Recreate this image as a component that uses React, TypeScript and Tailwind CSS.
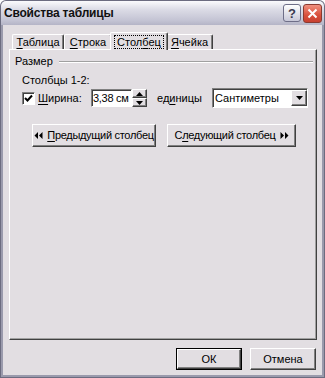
import React from "react";

const bevel =
  "border border-t-white border-l-white border-r-[#404040] border-b-[#404040] shadow-[inset_-1px_-1px_#808080]";
const sunken =
  "border border-t-[#808080] border-l-[#808080] border-r-white border-b-white shadow-[inset_1px_1px_#404040]";

function Tab({ label, u, w, selected }: { label: string; u: number; w: string; selected?: boolean }) {
  const text = (
    <span>
      {label.slice(0, u)}
      <span className="underline underline-offset-2">{label[u]}</span>
      {label.slice(u + 1)}
    </span>
  );
  if (selected) {
    return (
      <div className={`${w} relative z-10 -mx-[2px] -mb-[1px] h-[18px] pt-[2px] flex justify-center bg-[#e2dee2] border-t border-l border-t-white border-l-white border-r border-r-[#404040] shadow-[inset_-1px_0_#808080] rounded-t-[2px]`}>
        <span className="h-[14px] px-[2px] border border-dotted border-black leading-[12px] inline-block">{text}</span>
      </div>
    );
  }
  return (
    <div className={`${w} h-[15px] pt-[1px] text-center border-t border-l border-t-white border-l-white border-r border-r-[#404040] shadow-[inset_-1px_0_#808080] rounded-t-[2px] leading-[13px]`}>
      {text}
    </div>
  );
}

function DoubleArrow({ left }: { left?: boolean }) {
  return (
    <svg width="9" height="7" viewBox="0 0 9 7" className="shrink-0">
      {left ? (
        <path d="M4 0 L0.5 3.5 L4 7 Z M8.5 0 L5 3.5 L8.5 7 Z" fill="black" />
      ) : (
        <path d="M0.5 0 L4 3.5 L0.5 7 Z M5 0 L8.5 3.5 L5 7 Z" fill="black" />
      )}
    </svg>
  );
}

export default function App() {
  return (
    <div className="w-[325px] h-[378px] flex flex-col bg-[#6c6c80] rounded-t-[6px] p-[1px] font-['Liberation_Sans',sans-serif] text-[11px] text-black">
      {/* Title bar */}
      <div className="h-[24px] flex items-center rounded-t-[5px] bg-[linear-gradient(to_bottom,#fbfbfd,#dcdce6_35%,#c4c4d4_80%,#b4b4c6)] pl-[3px] pr-[2px]">
        <span className="font-bold text-[12px] tracking-[-0.2px] text-[#111]">Свойства таблицы</span>
        <div className="ml-auto flex gap-[2px] items-center">
          <div className="w-[18px] h-[18px] rounded-[3px] border border-[#6e6e88] bg-[linear-gradient(to_bottom,#ffffff,#c8c8d8)] flex items-center justify-center font-bold text-[13px] text-[#3a3a50] leading-none">
            ?
          </div>
          <div className="w-[19px] h-[19px] rounded-[3px] border border-[#8a3a30] bg-[linear-gradient(to_bottom,#f09080,#d8503c_60%,#c84030)] flex items-center justify-center">
            <svg width="11" height="11" viewBox="0 0 11 11">
              <path d="M1.5 1.5 L9.5 9.5 M9.5 1.5 L1.5 9.5" stroke="white" strokeWidth="2" />
            </svg>
          </div>
        </div>
      </div>

      {/* Body */}
      <div className="flex-1 flex flex-col bg-[#e2dee2] border-x-[2px] border-b-[2px] border-[#9a9aac] px-[6px]">
        {/* Tabs */}
        <div className="flex items-end pl-[3px] pt-[7px]">
          <Tab label="Таблица" u={0} w="w-[52px]" />
          <Tab label="Строка" u={0} w="w-[48px]" />
          <Tab label="Столбец" u={4} w="w-[58px]" selected />
          <Tab label="Ячейка" u={0} w="w-[47px]" />
        </div>

        {/* Panel */}
        <div className="h-[291px] w-[308px] border border-t-white border-l-white border-r-[#404040] border-b-[#404040] shadow-[inset_-1px_-1px_#a0a0a0] pl-[5px] pr-[3px] pt-[5px]">
          <div className="flex items-center h-[13px]">
            <span>Размер</span>
            <div className="flex-1 ml-[6px] border-t border-t-[#a0a0a0] border-b border-b-white" />
          </div>

          <div className="ml-[7px] mt-[6px] h-[13px] leading-[13px]">Столбцы 1-2:</div>

          <div className="flex items-center mt-[1px] ml-[7px] h-[20px]">
            <div className={`w-[13px] h-[13px] bg-white ${sunken} flex items-center justify-center`}>
              <svg width="9" height="9" viewBox="0 0 9 9">
                <path d="M1 4 L3.5 6.5 L8 1.5" stroke="black" strokeWidth="2" fill="none" />
              </svg>
            </div>
            <span className="ml-[3px] w-[53px]">
              <span className="underline underline-offset-2">Ш</span>ирина:
            </span>
            <div className={`w-[41px] h-[18px] bg-white ${sunken} flex items-center pl-[1px] leading-none whitespace-nowrap overflow-hidden tracking-[-0.3px]`}>
              3,38 см
            </div>
            <div className="flex flex-col w-[15px] h-[18px]">
              <div className={`flex-1 bg-[#e2dee2] ${bevel} flex items-center justify-center`}>
                <svg width="7" height="4" viewBox="0 0 7 4">
                  <path d="M0 4 L3.5 0 L7 4 Z" fill="black" />
                </svg>
              </div>
              <div className={`flex-1 bg-[#e2dee2] ${bevel} flex items-center justify-center`}>
                <svg width="7" height="4" viewBox="0 0 7 4">
                  <path d="M0 0 L3.5 4 L7 0 Z" fill="black" />
                </svg>
              </div>
            </div>
            <span className="ml-[10px] w-[55px]">
              ед<span className="underline underline-offset-2">и</span>ницы
            </span>
            <div className={`w-[96px] h-[20px] bg-white ${sunken} flex items-center`}>
              <span className="pl-[2px] flex-1">Сантиметры</span>
              <div className={`w-[16px] h-[16px] bg-[#e2dee2] ${bevel} flex items-center justify-center`}>
                <svg width="7" height="4" viewBox="0 0 7 4">
                  <path d="M0 0 L3.5 4 L7 0 Z" fill="black" />
                </svg>
              </div>
            </div>
          </div>

          <div className="flex mt-[16px] ml-[17px] gap-[11px] whitespace-nowrap tracking-[-0.3px]">
            <div className={`w-[124px] h-[23px] ${bevel} flex items-center justify-center gap-[4px]`}>
              <DoubleArrow left />
              <span>
                <span className="underline underline-offset-2">П</span>редыдущий столбец
              </span>
            </div>
            <div className={`w-[129px] h-[23px] ${bevel} flex items-center justify-center gap-[4px]`}>
              <span>
                С<span className="underline underline-offset-2">л</span>едующий столбец
              </span>
              <DoubleArrow />
            </div>
          </div>
        </div>

        {/* Bottom buttons */}
        <div className="flex justify-end gap-[8px] mt-[8px]">
          <div className="border border-black">
            <div className={`w-[64px] h-[20px] ${bevel} flex items-center justify-center`}>ОК</div>
          </div>
          <div className={`w-[66px] h-[22px] ${bevel} flex items-center justify-center`}>Отмена</div>
        </div>
      </div>
    </div>
  );
}
